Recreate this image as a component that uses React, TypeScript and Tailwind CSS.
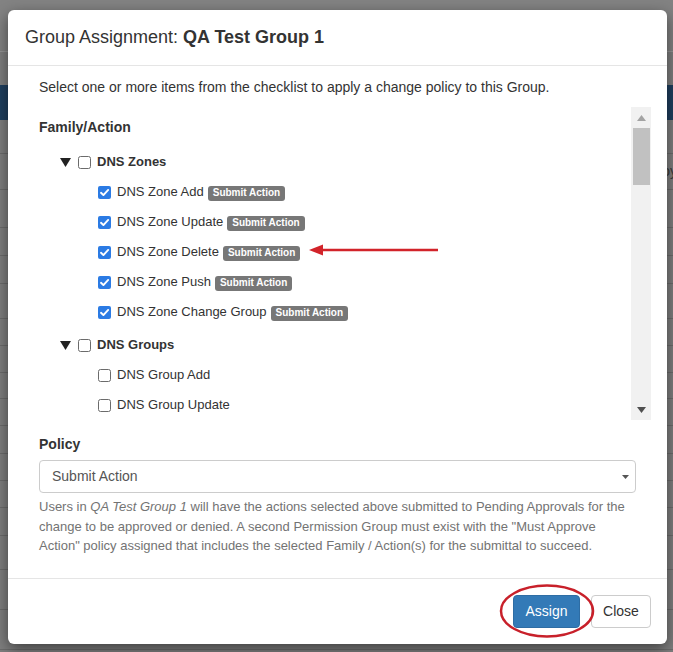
import React from 'react'

interface CheckProps {
    checked?: boolean;
}

const Check: React.FC<CheckProps> = ({ checked }) => {
    if (checked) {
        return (
            <svg width="13" height="13" viewBox="0 0 13 13" className="shrink-0">
                <rect x="0" y="0" width="13" height="13" rx="2" fill="#2b7be4" />
                <path d="M3 6.8 L5.4 9.1 L10.2 3.9" stroke="#fff" strokeWidth="1.9" fill="none" strokeLinecap="round" strokeLinejoin="round" />
            </svg>
        )
    }
    return (
        <svg width="13" height="13" viewBox="0 0 13 13" className="shrink-0">
            <rect x="0.5" y="0.5" width="12" height="12" rx="2" fill="#fff" stroke="#6b6b6b" />
        </svg>
    )
}

const Badge = () => (
    <span className="ml-[4px] mt-[2px] inline-flex h-[15px] items-center rounded-[3px] bg-[#777] px-[5px] text-[10px] font-bold leading-none text-white">
        Submit Action
    </span>
)

interface FamilyProps {
    title: string;
    items: { name: string; checked: boolean }[];
}

const Family: React.FC<FamilyProps> = ({ title, items }) => (
    <div className="flex flex-col">
        <div className="flex h-[30px] items-center pl-[21px]">
            <svg width="11" height="9" viewBox="0 0 11 9" className="mr-[7px] shrink-0">
                <path d="M0 0 L11 0 L5.5 9 Z" fill="#222" />
            </svg>
            <Check />
            <span className="ml-[6px] text-[13px] font-bold text-[#333]">{title}</span>
        </div>
        {items.map((item) => (
            <div key={item.name} className="flex h-[30px] items-center pl-[59px]">
                <Check checked={item.checked} />
                <span className="ml-[6px] text-[13px] text-[#333]">{item.name}</span>
                {item.checked && <Badge />}
            </div>
        ))}
    </div>
)

const zoneItems = [
    { name: 'DNS Zone Add', checked: true },
    { name: 'DNS Zone Update', checked: true },
    { name: 'DNS Zone Delete', checked: true },
    { name: 'DNS Zone Push', checked: true },
    { name: 'DNS Zone Change Group', checked: true },
]

const groupItems = [
    { name: 'DNS Group Add', checked: false },
    { name: 'DNS Group Update', checked: false },
    { name: 'DNS Group Delete', checked: false },
]

const bgRows = [34, 36, 38, 28, 28, 35, 27, 27, 26, 27, 28, 27, 27, 28, 34, 40, 40, 40]

export default function App() {
    return (
        <div className="relative h-[652px] w-[673px] overflow-hidden bg-[#7f7f7f] font-['Liberation_Sans',Arial,sans-serif]">
            {/* dimmed page behind the dialog */}
            <div className="flex flex-col">
                <div className="h-[52px] border-b border-[#969696] bg-[#838383]" />
                <div className="h-[33px] bg-[#7f7f7f]" />
                <div className="h-[35px] bg-[#1f3f5f]" />
                {bgRows.map((h, i) => (
                    <div
                        key={i}
                        style={{ height: h }}
                        className="flex items-center justify-end border-b border-[#6c6c6c]"
                    >
                        {i === 1 && <span className="mr-[-4px] text-[14px] text-[#3a3a3a]">Deploy</span>}
                    </div>
                ))}
            </div>

            {/* dialog */}
            <div className="absolute left-[8px] top-[10px] flex h-[634px] w-[659px] flex-col rounded-[6px] bg-white shadow-[0_5px_15px_rgba(0,0,0,0.5)]">
                <div className="flex h-[56px] shrink-0 items-center border-b border-[#e5e5e5] px-[17px] text-[18px] text-[#333]">
                    <span>Group Assignment:&nbsp;</span>
                    <span className="font-bold">QA Test Group 1</span>
                </div>

                <div className="flex flex-1 flex-col px-[31px] pt-[11px]">
                    <p className="text-[14px] leading-[20px] text-[#333]">
                        Select one or more items from the checklist to apply a change policy to this Group.
                    </p>

                    <div className="mr-[-15px] mt-[10px] flex h-[313px]">
                        <div className="flex-1 overflow-hidden pt-[10px]">
                            <div className="text-[14px] font-bold leading-[20px] text-[#333]">Family/Action</div>
                            <div className="mt-[10px]">
                                <Family title="DNS Zones" items={zoneItems} />
                            </div>
                            <div className="mt-[3px]">
                                <Family title="DNS Groups" items={groupItems} />
                            </div>
                        </div>
                        {/* scrollbar */}
                        <div className="flex w-[20px] flex-col items-center bg-[#f1f1f1]">
                            <svg width="9" height="6" viewBox="0 0 9 6" className="mt-[8px]">
                                <path d="M0 6 L4.5 0 L9 6 Z" fill="#a3a3a3" />
                            </svg>
                            <div className="mt-[7px] h-[57px] w-[17px] bg-[#c1c1c1]" />
                            <div className="flex-1" />
                            <svg width="9" height="6" viewBox="0 0 9 6" className="mb-[7px]">
                                <path d="M0 0 L9 0 L4.5 6 Z" fill="#505050" />
                            </svg>
                        </div>
                    </div>

                    <div className="mt-[14px] text-[14px] font-bold leading-[20px] text-[#333]">Policy</div>
                    <div className="mt-[6px] flex h-[33px] items-center justify-between rounded-[4px] border border-[#ccc] pl-[12px] pr-[6px] text-[14px] text-[#555]">
                        <span>Submit Action</span>
                        <svg width="7" height="4" viewBox="0 0 7 4">
                            <path d="M0 0 L7 0 L3.5 4 Z" fill="#555" />
                        </svg>
                    </div>
                    <p className="mt-[4px] text-[13px] leading-[19.5px] text-[#737373]">
                        Users in <i>QA Test Group 1</i> will have the actions selected above submitted to Pending Approvals for the change to be approved or denied. A second Permission Group must exist with the "Must Approve Action" policy assigned that includes the selected Family / Action(s) for the submittal to succeed.
                    </p>
                </div>

                <div className="flex h-[66px] shrink-0 items-start justify-end gap-[11px] border-t border-[#e5e5e5] pr-[16px] pt-[16px]">
                    <button className="flex h-[33px] w-[67px] items-center justify-center rounded-[4px] border border-[#2e6da4] bg-[#337ab7] text-[14px] text-white">
                        Assign
                    </button>
                    <button className="flex h-[33px] w-[60px] items-center justify-center rounded-[4px] border border-[#ccc] bg-white text-[14px] text-[#333]">
                        Close
                    </button>
                </div>
            </div>

            {/* annotation: arrow */}
            <svg className="absolute left-[305px] top-[240px]" width="140" height="20" viewBox="0 0 140 20">
                <line x1="14" y1="10" x2="133" y2="10" stroke="#d2232a" strokeWidth="2.5" />
                <path d="M4 10 L18 4.5 L18 15.5 Z" fill="#d2232a" />
            </svg>

            {/* annotation: ellipse */}
            <svg className="absolute left-[497px] top-[582px]" width="100" height="58" viewBox="0 0 100 58">
                <ellipse cx="50" cy="29" rx="46" ry="25.5" fill="none" stroke="#c8202a" strokeWidth="2.5" />
            </svg>
        </div>
    )
}
